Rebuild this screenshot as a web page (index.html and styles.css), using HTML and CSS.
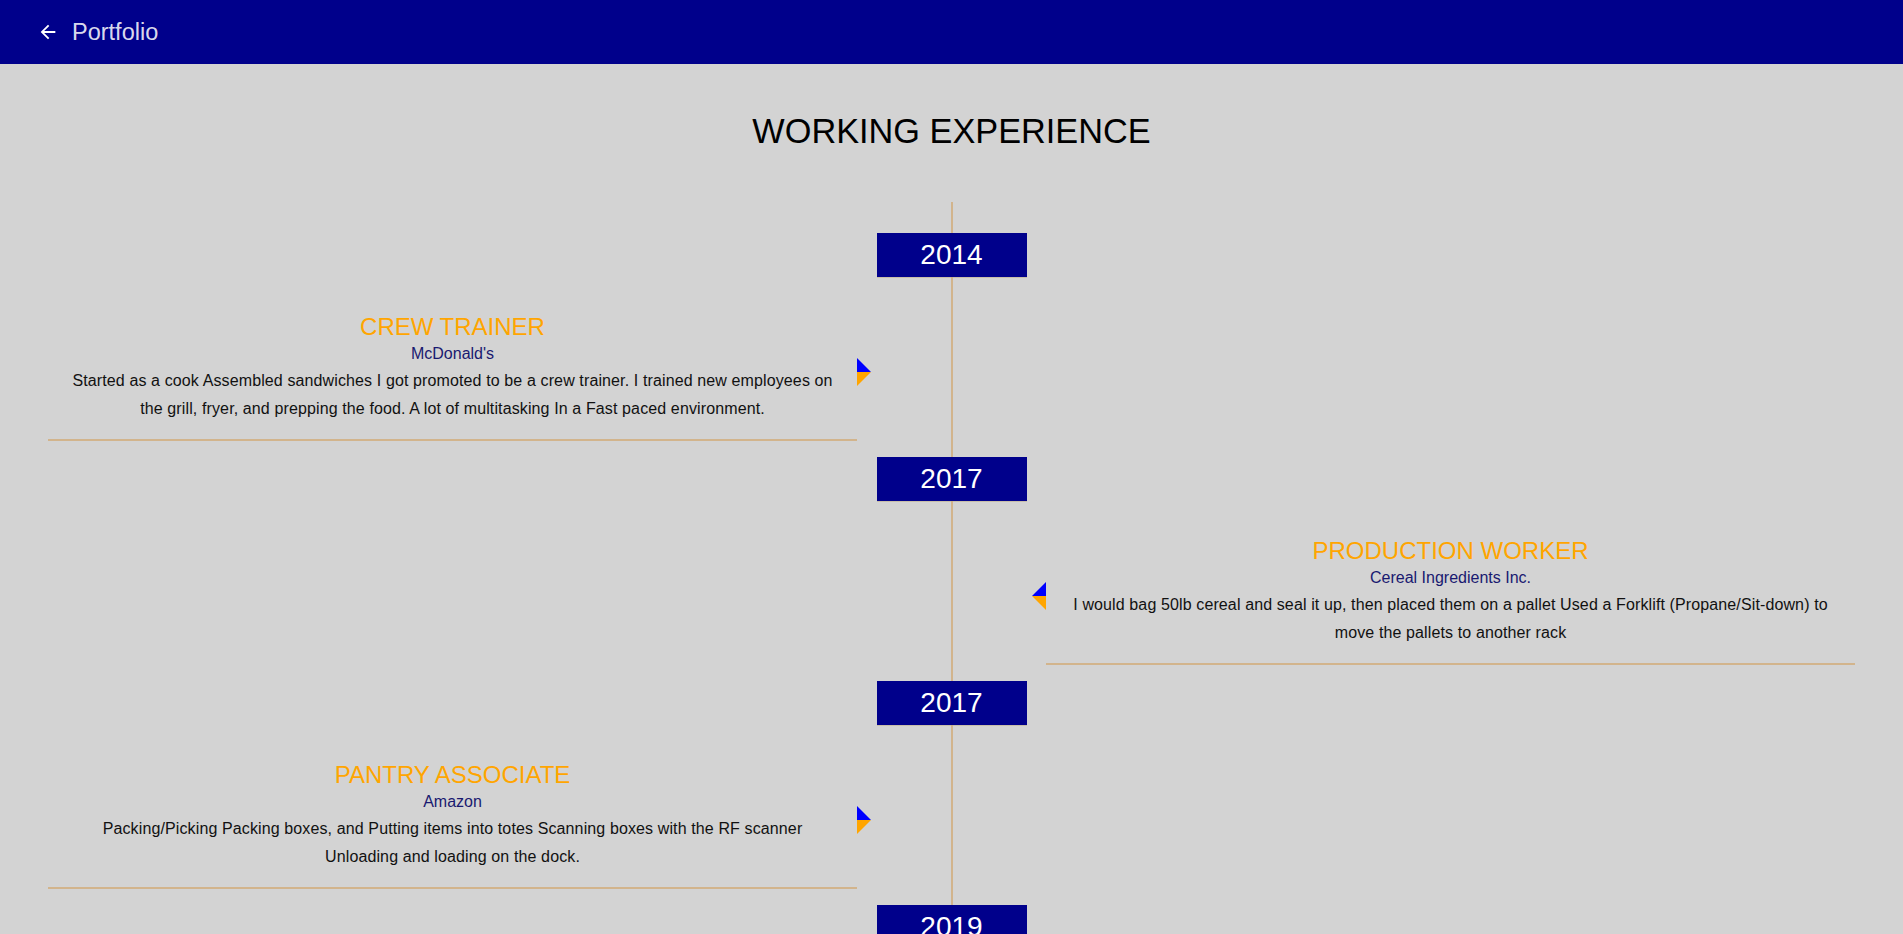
FILE: index.html
```html
<!DOCTYPE html>
<html lang="en">
<head>
<meta charset="utf-8">
<title>Portfolio - Working Experience</title>
<link rel="stylesheet" href="styles.css">
</head>
<body>
<header class="topbar">
  <svg class="back-icon" viewBox="0 0 24 24" width="22" height="22" aria-hidden="true">
    <path d="M20 11H7.83l5.59-5.59L12 4l-8 8 8 8 1.41-1.41L7.83 13H20v-2z" fill="#ffffff"/>
  </svg>
  <span class="topbar-title">Portfolio</span>
</header>

<main class="page">
  <h1 class="page-title">WORKING EXPERIENCE</h1>

  <section class="timeline">
    <div class="entry">
      <div class="year">2014</div>
      <article class="card card-left">
        <h2 class="job">CREW TRAINER</h2>
        <p class="company">McDonald's</p>
        <p class="desc">Started as a cook Assembled sandwiches I got promoted to be a crew trainer. I trained new employees on the grill, fryer, and prepping the food. A lot of multitasking In a Fast paced environment.</p>
        <span class="marker"></span>
      </article>
    </div>

    <div class="entry">
      <div class="year">2017</div>
      <article class="card card-right">
        <h2 class="job">PRODUCTION WORKER</h2>
        <p class="company">Cereal Ingredients Inc.</p>
        <p class="desc">I would bag 50lb cereal and seal it up, then placed them on a pallet Used a Forklift (Propane/Sit-down) to move the pallets to another rack</p>
        <span class="marker"></span>
      </article>
    </div>

    <div class="entry">
      <div class="year">2017</div>
      <article class="card card-left">
        <h2 class="job">PANTRY ASSOCIATE</h2>
        <p class="company">Amazon</p>
        <p class="desc">Packing/Picking Packing boxes, and Putting items into totes Scanning boxes with the RF scanner Unloading and loading on the dock.</p>
        <span class="marker"></span>
      </article>
    </div>

    <div class="entry">
      <div class="year">2019</div>
    </div>
  </section>
</main>
</body>
</html>
```

FILE: styles.css
```css
* {
  box-sizing: border-box;
}

html, body {
  margin: 0;
  padding: 0;
}

body {
  background: #d3d3d3;
  font-family: "Liberation Sans", Arial, sans-serif;
  color: #111;
  min-height: 100vh;
}

.topbar {
  height: 64px;
  background: #00008b;
  display: flex;
  align-items: center;
  padding-left: 37px;
  gap: 13px;
}

.back-icon {
  display: block;
  flex: none;
}

.topbar-title {
  font-size: 23.5px;
  color: rgba(255, 255, 255, 0.87);
}

.page {
  padding-top: 47px;
}

.page-title {
  margin: 0;
  font-size: 34.3px;
  line-height: 40px;
  font-weight: normal;
  text-align: center;
  color: #000;
}

.timeline {
  margin-top: 51px;
  padding: 31px 48px 0;
  background: linear-gradient(#d2b48c, #d2b48c) center top / 2px 100% no-repeat;
}

.entry {
  display: grid;
  grid-template-columns: 1fr 189px 1fr;
  margin-bottom: 16px;
}

.year {
  grid-column: 2;
  grid-row: 1;
  justify-self: center;
  width: 150px;
  height: 44px;
  line-height: 44px;
  background: #00008b;
  color: #fff;
  font-size: 28px;
  text-align: center;
  box-shadow: 0 1px 0 rgba(190, 170, 130, 0.5);
}

.card {
  grid-row: 2;
  position: relative;
  padding: 36px 20px 16px;
  border-bottom: 2px solid #d2b48c;
  text-align: center;
}

.card-left {
  grid-column: 1;
}

.card-right {
  grid-column: 3;
}

.job {
  margin: 0;
  font-size: 24px;
  line-height: 28px;
  font-weight: normal;
  color: #ffa500;
}

.company {
  margin: 0;
  font-size: 16px;
  line-height: 26px;
  color: #191970;
}

.desc {
  margin: 0;
  font-size: 16px;
  letter-spacing: 0.12px;
  line-height: 28px;
  color: #111;
}

.marker {
  position: absolute;
  top: 81px;
  width: 14px;
  height: 28px;
  background: linear-gradient(#0000ff 50%, #ffa500 50%);
}

.card-left .marker {
  right: -14px;
  clip-path: polygon(0 0, 100% 50%, 0 100%);
}

.card-right .marker {
  left: -14px;
  clip-path: polygon(100% 0, 0 50%, 100% 100%);
}
```
